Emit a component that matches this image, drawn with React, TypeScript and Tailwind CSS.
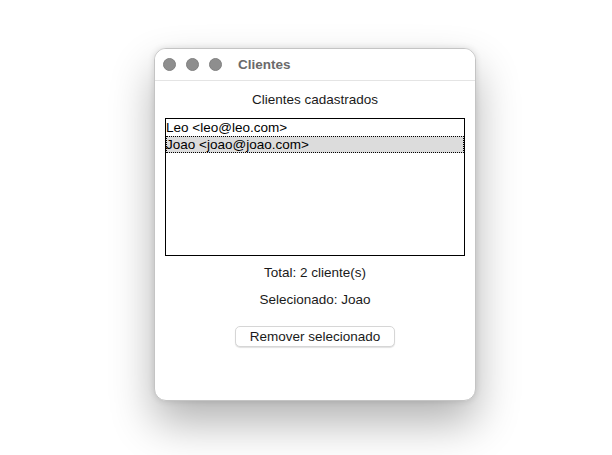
export default function App() {
  const clientes = [
    { nome: "Leo", email: "leo@leo.com" },
    { nome: "Joao", email: "joao@joao.com" },
  ];
  const selecionado = 1;

  return (
    <div
      className="w-[612px] h-[455px] bg-white pt-[48px] pl-[154px] overflow-hidden"
      style={{ fontFamily: '"Liberation Sans", Arial, sans-serif' }}
    >
      {/* Window */}
      <div className="w-[322px] h-[353px] bg-white rounded-[12px] border border-[#c4c4c4] shadow-[0_22px_44px_rgba(0,0,0,0.3),0_0_6px_rgba(0,0,0,0.12)] flex flex-col overflow-hidden">
        {/* Title bar */}
        <div className="h-[32px] shrink-0 flex items-center pl-[8px] border-b border-[#e4e4e4] bg-white">
          <div className="flex items-center gap-[10px]">
            <span className="w-[13px] h-[13px] rounded-full bg-[#8e8e8e] border border-[#808080]" />
            <span className="w-[13px] h-[13px] rounded-full bg-[#8e8e8e] border border-[#808080]" />
            <span className="w-[13px] h-[13px] rounded-full bg-[#8e8e8e] border border-[#808080]" />
          </div>
          <span className="ml-[16px] text-[13.5px] font-bold text-[#6a6a6a] leading-none">Clientes</span>
        </div>

        {/* Content */}
        <div className="flex flex-col items-center px-[10px] pt-[10px] text-[13.5px] text-[#1a1a1a]">
          <div className="h-[17px] leading-[17px]">Clientes cadastrados</div>

          <div className="mt-[10px] w-full h-[138px] border border-black bg-white">
            {clientes.map((c, i) => (
              <div
                key={c.email}
                className={
                  i === selecionado
                    ? "h-[17px] leading-[17px] bg-[#dcdcdc] outline-1 outline-dotted outline-black -outline-offset-1 text-black whitespace-nowrap"
                    : "h-[17px] leading-[17px] text-black whitespace-nowrap"
                }
              >
                {c.nome} &lt;{c.email}&gt;
              </div>
            ))}
          </div>

          <div className="mt-[8px] h-[17px] leading-[17px]">Total: {clientes.length} cliente(s)</div>
          <div className="mt-[10px] h-[17px] leading-[17px]">Selecionado: {clientes[selecionado].nome}</div>

          <button className="mt-[18px] w-[160px] h-[21px] rounded-[5px] border border-[#d6d6d6] bg-white shadow-[0_1px_1px_rgba(0,0,0,0.12)] text-[13.5px] text-[#1a1a1a] leading-none">
            Remover selecionado
          </button>
        </div>
      </div>
    </div>
  );
}
